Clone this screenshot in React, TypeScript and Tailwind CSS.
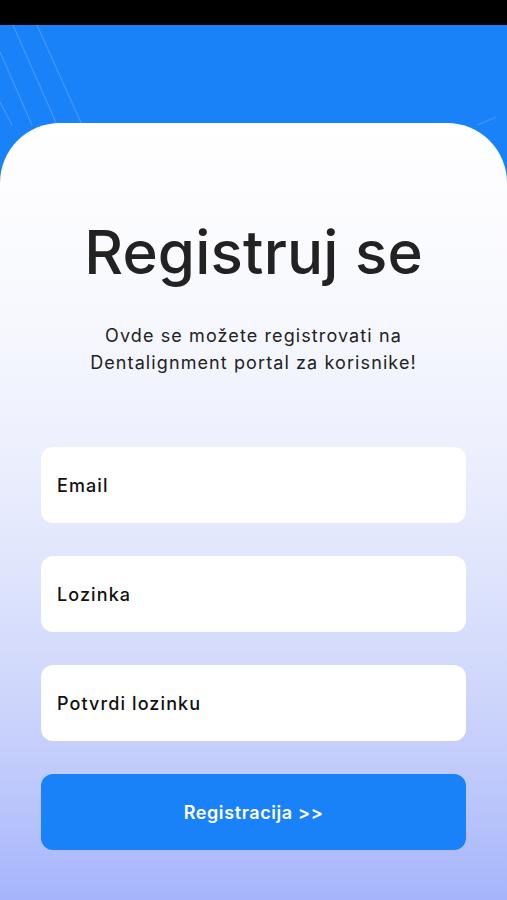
import React from "react";

export default function App() {
  const font = { fontFamily: "Inter, 'Noto Sans', sans-serif" };
  return (
    <div className="w-[507px] h-[900px] flex flex-col bg-black overflow-hidden" style={font}>
      <div className="h-[25px] bg-black shrink-0" />
      <div className="relative flex-1 flex flex-col bg-[#1a82f8] pt-[98px]">
        <svg className="absolute left-0 top-0 pointer-events-none" width="507" height="110" viewBox="0 0 507 110">
          <g stroke="#ffffff" strokeOpacity="0.18" strokeWidth="1.2" fill="none">
            <line x1="13" y1="0" x2="57" y2="100" />
            <line x1="37" y1="0" x2="82" y2="100" />
            <line x1="0" y1="27" x2="32" y2="100" />
            <line x1="0" y1="77" x2="12" y2="100" />
            <line x1="478" y1="100" x2="496" y2="92" />
          </g>
        </svg>
        <div className="relative flex-1 rounded-t-[60px] bg-[linear-gradient(180deg,#ffffff_0%,#f7f8fe_25%,#eef1fd_40%,#dde3fc_60%,#c6cffb_80%,#a5b5fb_100%)] flex flex-col items-center px-[41px]">
          <h1 className="mt-[93px] text-[60px] leading-[72px] font-medium text-[#222222] tracking-[0.2px]">
            Registruj se
          </h1>
          <p className="mt-[34px] text-[18px] leading-[27px] text-[#222222] text-center tracking-[1.1px] whitespace-nowrap">
            Ovde se možete registrovati na
            <br />
            Dentalignment portal za korisnike!
          </p>
          <div className="mt-[71px] w-full flex flex-col gap-[33px]">
            <div className="h-[76px] bg-white rounded-[12px] flex items-center px-[16px]">
              <span className="text-[18px] font-medium text-[#111111] tracking-[1.1px]">Email</span>
            </div>
            <div className="h-[76px] bg-white rounded-[12px] flex items-center px-[16px]">
              <span className="text-[18px] font-medium text-[#111111] tracking-[1.1px]">Lozinka</span>
            </div>
            <div className="h-[76px] bg-white rounded-[12px] flex items-center px-[16px]">
              <span className="text-[18px] font-medium text-[#111111] tracking-[1.1px]">Potvrdi lozinku</span>
            </div>
            <button className="h-[76px] bg-[#1a82f8] rounded-[12px] flex items-center justify-center text-white text-[18px] font-semibold tracking-[0.6px]">
              Registracija &gt;&gt;
            </button>
          </div>
        </div>
      </div>
    </div>
  );
}
